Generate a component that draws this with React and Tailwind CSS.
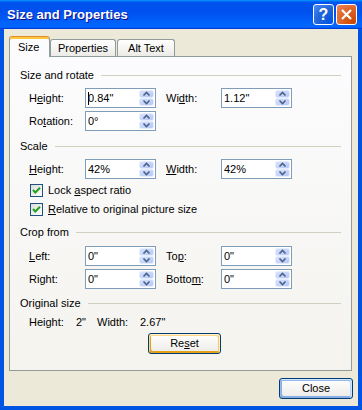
import React from "react";

function Spin() {
  return (
    <svg width="15" height="16" viewBox="0 0 15 16" className="absolute right-[1px] top-[1px]">
      <defs>
        <linearGradient id="sg" x1="0" y1="0" x2="1" y2="1">
          <stop offset="0" stopColor="#d8e3fd" />
          <stop offset="1" stopColor="#b2c6f6" />
        </linearGradient>
      </defs>
      <rect x="0.5" y="0.5" width="14" height="7" rx="2" fill="url(#sg)" stroke="#e6edfd" />
      <rect x="0.5" y="8.5" width="14" height="7" rx="2" fill="url(#sg)" stroke="#e6edfd" />
      <path d="M4.5 5.5 L7.5 2.5 L10.5 5.5" stroke="#4d6185" strokeWidth="1.6" fill="none" />
      <path d="M4.5 10.5 L7.5 13.5 L10.5 10.5" stroke="#4d6185" strokeWidth="1.6" fill="none" />
    </svg>
  );
}

function Input({ value, caret }) {
  return (
    <div className="relative w-[71px] h-[20px] border border-[#7F9DB9] bg-white shrink-0">
      <div className="pl-[2px] leading-[18px] text-[11px] text-black">{value}</div>
      {caret && <div className="absolute left-[2px] top-[3px] w-px h-[13px] bg-black" />}
      <Spin />
    </div>
  );
}

function Header({ children }) {
  return (
    <div className="flex items-center h-[14px]">
      <span className="text-[11px] leading-[14px]">{children}</span>
      <div className="flex-1 h-px bg-[#D0D0BF] ml-[7px]" />
    </div>
  );
}

function Row({ l1, v1, l2, v2, caret, className = "" }) {
  return (
    <div className={"flex items-center h-[20px] ml-[9px] " + className}>
      <span className="w-[56px] text-[11px]">{l1}</span>
      <Input value={v1} caret={caret} />
      {l2 && (
        <>
          <span className="w-[55px] ml-[10px] text-[11px]">{l2}</span>
          <Input value={v2} />
        </>
      )}
    </div>
  );
}

function Check({ children, className = "" }) {
  return (
    <div className={"flex items-center h-[16px] ml-[10px] " + className}>
      <div className="w-[13px] h-[13px] border border-[#1C5180] bg-linear-to-br from-[#dcdcd7] to-white flex items-center justify-center">
        <svg width="11" height="11" viewBox="0 0 11 11">
          <path d="M2 5 L4.3 7.5 L9 2.8" stroke="#21A121" strokeWidth="2" fill="none" />
        </svg>
      </div>
      <span className="ml-[5px] text-[11px]">{children}</span>
    </div>
  );
}

export default function App() {
  return (
    <div className="w-[362px] h-[410px] flex flex-col font-['Liberation_Sans',Arial,sans-serif] text-black bg-[#0054E3] overflow-hidden">
      {/* title bar */}
      <div className="h-[29px] shrink-0 flex items-center bg-[linear-gradient(180deg,#0997ff,#0053ee_8%,#0050ee_40%,#06f_88%,#06f_93%,#005bff_95%,#003dd7_96%,#003dd7)]">
        <span className="ml-[7px] text-white font-bold text-[13px] [text-shadow:1px_1px_0_#0f1089]">
          Size and Properties
        </span>
        <div className="ml-auto flex gap-[2px] mr-[5px]">
          <div className="w-[21px] h-[21px] rounded-[3px] border border-white bg-[radial-gradient(circle_at_90%_90%,#0054e9_0%,#2263d5_55%,#4d8ef8_100%)] flex items-center justify-center text-white font-bold text-[16px] leading-none">
            ?
          </div>
          <div className="w-[21px] h-[21px] rounded-[3px] border border-white bg-[radial-gradient(circle_at_90%_90%,#cc4600_0%,#dc6527_55%,#f08560_100%)] flex items-center justify-center">
            <svg width="13" height="13" viewBox="0 0 13 13">
              <path d="M2 2 L11 11 M11 2 L2 11" stroke="white" strokeWidth="2.2" />
            </svg>
          </div>
        </div>
      </div>

      {/* body */}
      <div className="flex-1 mx-[4px] mb-[4px] bg-[#ECE9D8] flex flex-col text-[11px]">
        {/* tabs */}
        <div className="relative z-10 flex items-end h-[21px] mt-[7px] ml-[5px] -mb-[1px]">
          <div className="h-[21px] w-[41px] bg-[#fcfcfe] border-x border-t border-[#919B9C] border-t-[#E68B2C] rounded-t-[3px] shadow-[inset_0_2px_#ffc73c] flex items-center pl-[8px] pt-[1px]">
            Size
          </div>
          <div className="h-[17px] mb-[1px] w-[66px] border-x border-t border-[#919B9C] rounded-t-[3px] bg-linear-to-b from-white to-[#ECEBE6] flex items-center justify-center">
            Properties
          </div>
          <div className="h-[17px] mb-[1px] ml-[1px] w-[58px] border-x border-t border-[#919B9C] rounded-t-[3px] bg-linear-to-b from-white to-[#ECEBE6] flex items-center justify-center">
            Alt Text
          </div>
        </div>

        {/* panel */}
        <div className="h-[315px] w-[343px] ml-[5px] border border-[#919B9C] bg-linear-to-b from-[#fcfcfe] to-[#f4f3ee] px-[10px] pt-[11px] flex flex-col">
          <Header>Size and rotate</Header>
          <Row
            className="mt-[6px]"
            l1={<>H<u>e</u>ight:</>}
            v1={'0.84"'}
            caret
            l2={<>Wi<u>d</u>th:</>}
            v2={'1.12"'}
          />
          <Row className="mt-[3px]" l1={<>Ro<u>t</u>ation:</>} v1={"0°"} />

          <div className="mt-[8px]"><Header>Scale</Header></div>
          <Row
            className="mt-[6px]"
            l1={<><u>H</u>eight:</>}
            v1="42%"
            l2={<><u>W</u>idth:</>}
            v2="42%"
          />
          <Check className="mt-[3px]">Lock <u>a</u>spect ratio</Check>
          <Check className="mt-[3px]"><u>R</u>elative to original picture size</Check>

          <div className="mt-[8px]"><Header>Crop from</Header></div>
          <Row
            className="mt-[7px]"
            l1={<><u>L</u>eft:</>}
            v1={'0"'}
            l2={<>To<u>p</u>:</>}
            v2={'0"'}
          />
          <Row
            className="mt-[3px]"
            l1={<>Ri<u>g</u>ht:</>}
            v1={'0"'}
            l2={<>Botto<u>m</u>:</>}
            v2={'0"'}
          />

          <div className="mt-[7px]"><Header>Original size</Header></div>
          <div className="mt-[5px] ml-[9px] h-[14px] flex items-center">
            <span className="w-[47px]">Height:</span>
            <span className="w-[21px]">2"</span>
            <span className="w-[43px]">Width:</span>
            <span>2.67"</span>
          </div>
          <div className="mt-[4px] ml-[128px] w-[73px] h-[21px] rounded-[3px] border border-[#003C74] bg-linear-to-b from-white to-[#ECEBE6] shadow-[inset_-1px_1px_#fff0cf,inset_1px_2px_#fdd889,inset_-2px_2px_#fbc761,inset_2px_-2px_#e5a01a] flex items-center justify-center">
            Re<u>s</u>et
          </div>
        </div>

        <div className="mt-[7px] ml-auto mr-[5px] w-[74px] h-[21px] rounded-[3px] border border-[#003C74] bg-linear-to-b from-white to-[#ECEBE6] shadow-[inset_-1px_1px_#cee7ff,inset_1px_2px_#98b8ea,inset_-2px_2px_#bcd4f6,inset_1px_-1px_#89ade4,inset_2px_-2px_#89ade4] flex items-center justify-center">
          Close
        </div>
      </div>
    </div>
  );
}
